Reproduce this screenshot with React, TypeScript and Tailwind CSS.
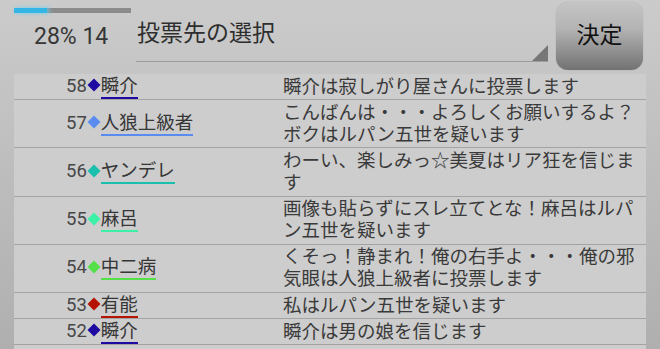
import React from "react";

type Row = { no: number; name: string; color: string; msg: string };

const rows: Row[] = [
  { no: 58, name: "瞬介", color: "#1e0aa0", msg: "瞬介は寂しがり屋さんに投票します" },
  { no: 57, name: "人狼上級者", color: "#5a8cf0", msg: "こんばんは・・・よろしくお願いするよ？ボクはルパン五世を疑います" },
  { no: 56, name: "ヤンデレ", color: "#1abfae", msg: "わーい、楽しみっ☆美夏はリア狂を信じます" },
  { no: 55, name: "麻呂", color: "#3cf0a8", msg: "画像も貼らずにスレ立てとな！麻呂はルパン五世を疑います" },
  { no: 54, name: "中二病", color: "#55e04a", msg: "くそっ！静まれ！俺の右手よ・・・俺の邪気眼は人狼上級者に投票します" },
  { no: 53, name: "有能", color: "#b41400", msg: "私はルパン五世を疑います" },
  { no: 52, name: "瞬介", color: "#1e0aa0", msg: "瞬介は男の娘を信じます" },
];

function Diamond({ color }: { color: string }) {
  return (
    <svg width="14" height="14" viewBox="0 0 14 14" className="inline-block align-middle -mt-[3px]">
      <polygon points="7,0.5 13.5,7 7,13.5 0.5,7" fill={color} />
    </svg>
  );
}

export default function App() {
  return (
    <div className="w-[660px] h-[349px] overflow-hidden bg-[linear-gradient(to_bottom,#cbcbcb,#afafaf)] font-['Roboto','Noto_Sans_CJK_JP',sans-serif]">
      {/* header */}
      <div className="flex h-[74px]">
        <div className="w-[136px] pl-[14px] pt-[8px]">
          <div className="relative w-[117px] h-[4.5px] bg-[#8b8b8b]">
            <div className="h-full w-[33px] bg-[#33b5e5] shadow-[2px_0_4px_#6fd0f0]" />
          </div>
          <div className="mt-[10.5px] pl-[20px] text-[23px] leading-[28px] text-[#363636]">28% 14</div>
        </div>
        <div className="relative w-[412px] h-[62px] border-b-[1.5px] border-[#9c9c9c]">
          <div className="pl-[1px] pt-[17px] text-[23px] leading-[33px] text-[#2e2e2e]">投票先の選択</div>
          <svg width="16" height="16" viewBox="0 0 16 16" className="absolute right-0 bottom-0">
            <polygon points="16,0 16,16 0,16" fill="#767676" />
          </svg>
        </div>
        <div className="ml-[8px] mt-[2px] w-[87px] h-[68px] rounded-[12px] bg-[linear-gradient(to_bottom,#c5c5c5,#b3b3b3_40%,#727272)] shadow-[0_0_1px_#8a8a8a] flex items-center justify-center text-[23px] text-[#111]">
          決定
        </div>
      </div>
      {/* list */}
      <div className="mx-[14px] bg-[#cdcdcd]">
        {rows.map((r, i) => (
          <div key={i} className="grid grid-cols-[269px_1fr] border-b border-[#a3a3a3]">
            <div className="flex items-center pl-[52px]">
              <div className="text-[18.5px] leading-[22px] whitespace-nowrap">
                <span className="text-[#474747]">{r.no}</span>
                <Diamond color={r.color} />
                <span
                  className="inline-block text-[#363636] border-b-2 leading-[22px]"
                  style={{ borderColor: r.color }}
                >
                  {r.name}
                </span>
              </div>
            </div>
            <div className="py-[1.6px] pr-[6px] text-[18.5px] leading-[22px] text-[#3a3a3a]">{r.msg}</div>
          </div>
        ))}
        <div className="h-[26px]" />
      </div>
    </div>
  );
}
